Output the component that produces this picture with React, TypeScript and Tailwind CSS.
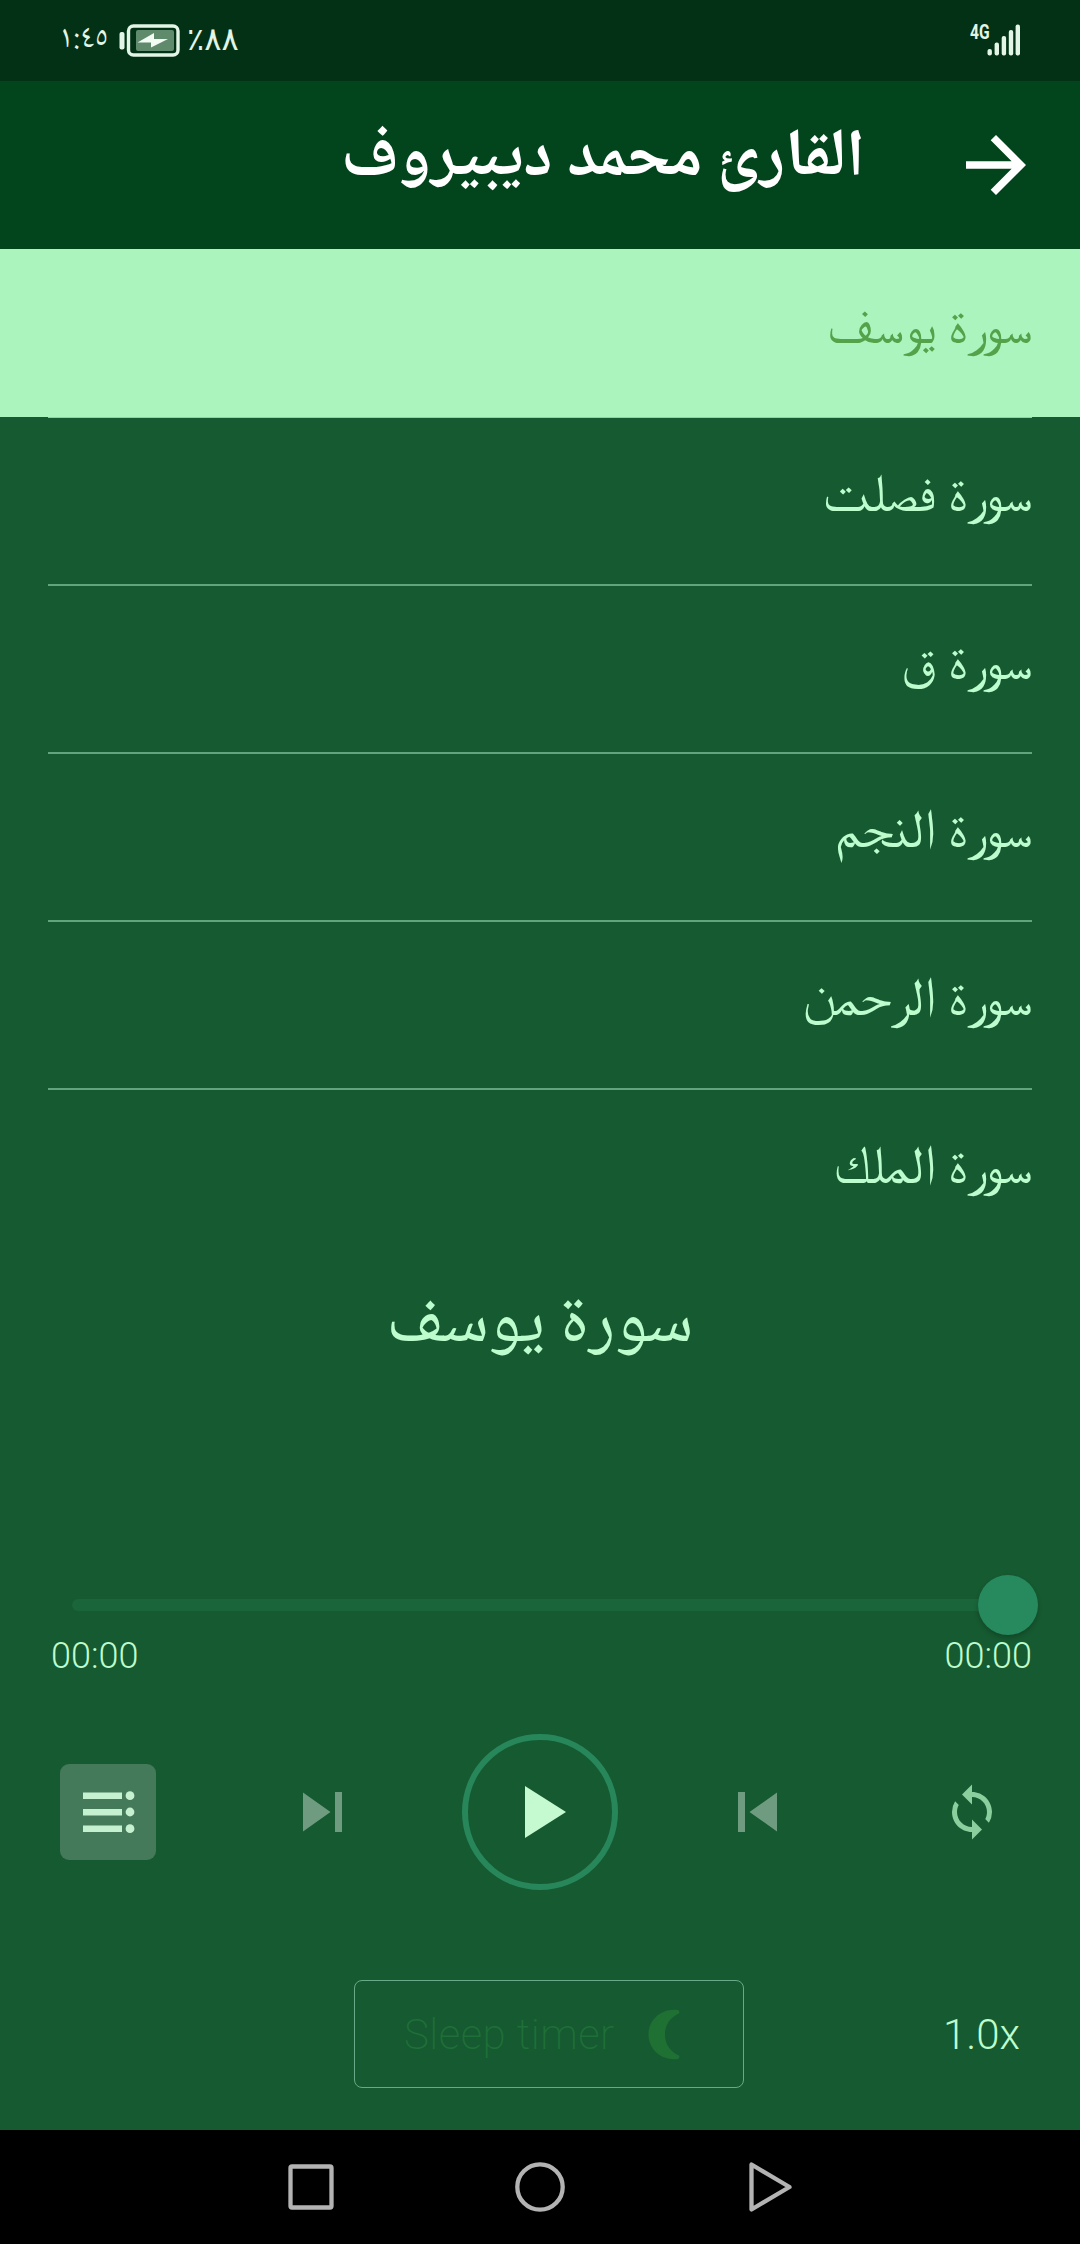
import { MdArrowForward, MdSync } from 'react-icons/md';
import clsx from 'clsx';

const SURAHS = ['سورة يوسف', 'سورة فصلت', 'سورة ق', 'سورة النجم', 'سورة الرحمن', 'سورة الملك'];

function StatusBar() {
  return (
    <div className="flex h-[81px] shrink-0 items-start justify-between bg-[#023115] pl-[59px] pr-[60px] text-[#e2f5e6]">
      <div className="flex items-start">
        <span className="w-[49px] font-['Noto_Naskh_Arabic','Noto_Sans',sans-serif] text-[32px] leading-[80px] whitespace-nowrap">١:٤٥</span>
        <svg className="mt-[24px] ml-[11px]" width="61" height="33" viewBox="0 0 61 33">
          <rect x="0.5" y="8" width="5" height="17.5" rx="2" fill="currentColor" />
          <rect x="9.5" y="2" width="49.5" height="29" rx="5" fill="none" stroke="currentColor" strokeWidth="3.4" />
          <rect x="17" y="6" width="38" height="21" rx="2" fill="#5f8a6c" />
          <path d="M18.5 18.5 35 9v6h14L32 23.5v-5z" fill="#f2fbf4" />
        </svg>
        <span className="ml-[7px] font-['Noto_Sans','DejaVu_Sans',sans-serif] text-[32px] leading-[76px] whitespace-nowrap">٪٨٨</span>
      </div>
      <div className="flex items-start">
        <span className="mt-[21px] w-[17px] origin-left scale-x-[0.78] font-['Roboto',sans-serif] text-[20px] leading-[22px] font-bold">4G</span>
        <svg className="mt-[24px]" width="33" height="32" viewBox="0 0 33 32">
          <rect x="0.5" y="25" width="4.4" height="6.5" rx="2" fill="currentColor" />
          <rect x="7.6" y="18.5" width="4.4" height="13" rx="2" fill="currentColor" />
          <rect x="14.7" y="12" width="4.4" height="19.5" rx="2" fill="currentColor" />
          <rect x="21.8" y="6" width="4.4" height="25.5" rx="2" fill="currentColor" />
          <rect x="28.6" y="0.5" width="4.4" height="31" rx="2" fill="currentColor" />
        </svg>
      </div>
    </div>
  );
}

function Header() {
  return (
    <header dir="rtl" className="flex h-[168px] shrink-0 items-center bg-[#02441b] pr-[39px] text-white">
      <MdArrowForward size={90} />
      <h1 className="mr-[86px] pb-[8px] font-['Noto_Naskh_Arabic','Noto_Sans',serif] text-[66.7px] leading-[100px] font-bold whitespace-nowrap">القارئ محمد ديبيروف</h1>
    </header>
  );
}

function SurahList() {
  return (
    <ul dir="rtl" className="h-[1001px] shrink-0 overflow-hidden">
      {SURAHS.map((name, i) => (
        <li key={name} className={clsx('relative h-[168px] px-[48px] text-[54px] leading-[156px]', i === 0 ? 'bg-[#abf4bd] text-[#54a24a]' : 'text-[#bdfccd]')}>
          {name}
          <span className={clsx('absolute inset-x-[48px] -bottom-px', i === 0 ? 'h-px bg-[#8fd3a3]' : 'h-[2px] bg-[#62a47d]')} />
        </li>
      ))}
    </ul>
  );
}

function Seekbar() {
  return (
    <div className="px-[48px]">
      <div className="flex h-[60px] items-center pl-[24px]">
        <div className="h-[12px] flex-1 rounded-l-full bg-[#1a653a]" />
        <div className="-mr-[6px] size-[60px] rounded-full bg-[#278a5e] shadow-[0_3px_5px_rgba(0,0,0,0.2)]" />
      </div>
      <div className="flex justify-between pl-[3px] font-['Roboto',sans-serif] text-[36px] leading-[42px] font-light">
        <span>00:00</span>
        <span>00:00</span>
      </div>
    </div>
  );
}

function Controls() {
  return (
    <div className="mt-[57px] flex h-[156px] items-center pl-[60px]">
      <button className="flex size-[96px] items-center justify-center rounded-[9px] bg-[#447959]">
        <svg width="96" height="96" viewBox="0 0 96 96" fill="#c5f1d0">
          <path d="M23 28.5h39v6.5H23zM23 45h39v6.5H23zM23 61.5h39V68H23z" />
          <circle cx="70" cy="31.7" r="4.4" />
          <circle cx="70" cy="48" r="4.4" />
          <circle cx="70" cy="64.7" r="4.4" />
        </svg>
      </button>
      <svg className="ml-[147px]" width="39" height="40" viewBox="0 0 39 40" fill="#6f9c80">
        <path d="M0 0.5 27.5 20 0 39.5zM32 0h7v40h-7z" />
      </svg>
      <button className="ml-[120px] flex size-[156px] items-center justify-center rounded-full border-[6px] border-[#27865a]">
        <svg className="ml-[11px]" width="41" height="52" viewBox="0 0 41 52" fill="#c5f9d0">
          <path d="M0 0 41 26 0 52z" />
        </svg>
      </button>
      <svg className="ml-[120px]" width="39" height="40" viewBox="0 0 39 40" fill="#6f9c80">
        <path d="M39 0.5 11.5 20 39 39.5zM0 0h7v40H0z" />
      </svg>
      <MdSync size={60} className="ml-[165px] text-[#8bcf9f]" />
    </div>
  );
}

function BottomRow() {
  return (
    <div className="mt-[90px] flex h-[108px] items-center justify-between pl-[354px] pr-[60px] font-['Roboto',sans-serif] text-[42px] font-light">
      <button className="flex h-[108px] w-[390px] items-center rounded-[8px] border border-[#6aa987] pl-[49px] font-extralight tracking-[0.5px] text-[#1f6f38]">
        Sleep timer
        <svg className="ml-auto mr-[63px]" width="32" height="51" viewBox="0 0 32 51" fill="#1f7033">
          <path d="M30 1a4 3 0 0 1 1 3.5C21 9 17 17 17 25.5S21 42 31 46.5a4 3 0 0 1-1 3.5C13 52 0.5 40 0.5 25.5S13-1 30 1z" />
        </svg>
      </button>
      <span>1.0x</span>
    </div>
  );
}

function NavBar() {
  return (
    <div className="mt-auto flex h-[114px] items-center bg-black pl-[288px]">
      <svg width="46" height="50" viewBox="0 0 46 50" fill="none" stroke="#b3b3b3" strokeWidth="4.3">
        <rect x="2.5" y="4.5" width="41" height="41" rx="1.5" />
      </svg>
      <svg className="ml-[181px]" width="50" height="50" viewBox="0 0 50 50" fill="none" stroke="#b3b3b3" strokeWidth="4.3">
        <circle cx="25" cy="25" r="22.7" />
      </svg>
      <svg className="ml-[184px]" width="44" height="50" viewBox="0 0 44 50" fill="none" stroke="#b3b3b3" strokeWidth="4.3" strokeLinejoin="round">
        <path d="M2.5 2.5v45l38-22.5z" />
      </svg>
    </div>
  );
}

export default function App() {
  return (
    <div className="flex h-[2244px] w-[1080px] flex-col overflow-hidden bg-[#165a31] font-['FreeSerif','Noto_Naskh_Arabic','Noto_Sans',serif] text-[#bdfccd]">
      <StatusBar />
      <Header />
      <SurahList />
      <div dir="rtl" className="h-[325px] text-center font-['Noto_Naskh_Arabic','Noto_Sans',serif] text-[69.3px] leading-[153px]">{SURAHS[0]}</div>
      <Seekbar />
      <Controls />
      <BottomRow />
      <NavBar />
    </div>
  );
}
